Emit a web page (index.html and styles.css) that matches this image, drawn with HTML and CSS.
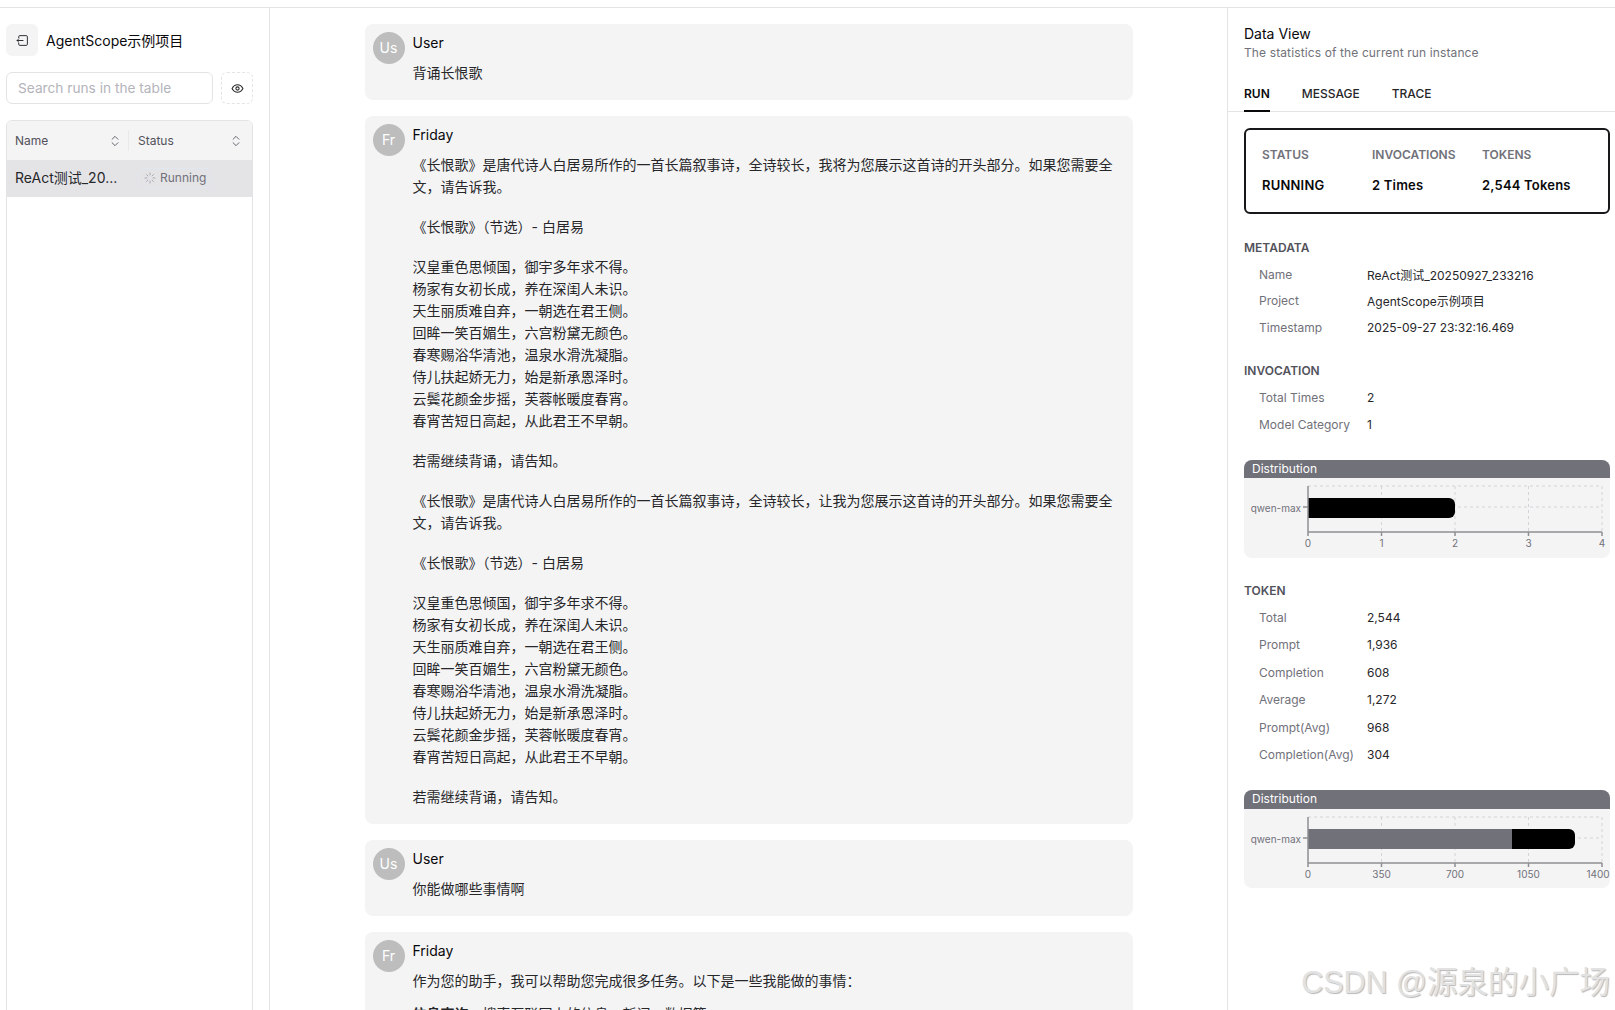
FILE: index.html
```html
<!DOCTYPE html>
<html>
<head>
  <title>AgentScope Studio</title>
  <meta charset="utf-8">
  <meta name="viewport" content="width=device-width, initial-scale=1.0">
  <link rel="stylesheet" href="styles.css">
</head>
<body>

  <div class="layout">

    <!-- Runs sidebar -->
    <aside class="sidebar">
      <div class="project-row">
        <button class="icon-btn">
          <svg width="13" height="13" viewBox="0 0 24 24" fill="none" stroke="currentColor" stroke-width="1.750" stroke-linecap="round" stroke-linejoin="round">
            <path d="M5 7V5a2 2 0 0 1 2-2h12a2 2 0 0 1 2 2v14a2 2 0 0 1-2 2H7a2 2 0 0 1-2-2v-2"/>
            <path d="M13 12H2"/>
            <path d="M5 9l-3 3 3 3"/>
          </svg>
        </button>
        <span class="project-name">AgentScope示例项目</span>
      </div>
      <div class="search-row">
        <input class="search-input" type="text" placeholder="Search runs in the table">
        <button class="eye-btn">
          <svg width="13" height="13" viewBox="0 0 24 24" fill="none" stroke="currentColor" stroke-width="2" stroke-linecap="round" stroke-linejoin="round">
            <path d="M2 12s3.600-7 10-7 10 7 10 7-3.600 7-10 7-10-7-10-7z"/>
            <circle cx="12" cy="12" r="3"/>
          </svg>
        </button>
      </div>
      <div class="runs-table">
        <div class="runs-head">
          <div class="head-cell name-col">
            <span>Name</span>
            <svg width="14" height="14" viewBox="0 0 24 24" fill="none" stroke="currentColor" stroke-width="1.500" stroke-linecap="round" stroke-linejoin="round"><path d="M7 15l5 5 5-5"/><path d="M7 9l5-5 5 5"/></svg>
          </div>
          <div class="head-cell status-col">
            <span>Status</span>
            <svg width="14" height="14" viewBox="0 0 24 24" fill="none" stroke="currentColor" stroke-width="1.500" stroke-linecap="round" stroke-linejoin="round"><path d="M7 15l5 5 5-5"/><path d="M7 9l5-5 5 5"/></svg>
          </div>
        </div>
        <div class="runs-row">
          <div class="run-name">ReAct测试_20...</div>
          <div class="run-status">
            <span class="badge">
              <svg class="spinner" width="12" height="12" viewBox="0 0 24 24" fill="none" stroke="currentColor" stroke-width="1.750" stroke-linecap="round"><path d="M12 2v4"/><path d="M16.200 7.800l2.900-2.900"/><path d="M18 12h4"/><path d="M16.200 16.200l2.900 2.900"/><path d="M12 18v4"/><path d="M4.900 19.100l2.900-2.900"/><path d="M2 12h4"/><path d="M4.900 4.900l2.900 2.900"/></svg>
              Running
            </span>
          </div>
        </div>
      </div>
    </aside>

    <!-- Chat -->
    <main class="chat">
      <div class="bubble">
        <div class="avatar">Us</div>
        <div class="bubble-body">
          <div class="sender">User</div>
          <p>背诵长恨歌</p>
        </div>
      </div>

      <div class="bubble">
        <div class="avatar">Fr</div>
        <div class="bubble-body">
          <div class="sender">Friday</div>
          <p>《长恨歌》是唐代诗人白居易所作的一首长篇叙事诗，全诗较长，我将为您展示这首诗的开头部分。如果您需要全文，请告诉我。</p>
          <p>《长恨歌》（节选）- 白居易</p>
          <p>汉皇重色思倾国，御宇多年求不得。<br>杨家有女初长成，养在深闺人未识。<br>天生丽质难自弃，一朝选在君王侧。<br>回眸一笑百媚生，六宫粉黛无颜色。<br>春寒赐浴华清池，温泉水滑洗凝脂。<br>侍儿扶起娇无力，始是新承恩泽时。<br>云鬓花颜金步摇，芙蓉帐暖度春宵。<br>春宵苦短日高起，从此君王不早朝。</p>
          <p>若需继续背诵，请告知。</p>
          <p>《长恨歌》是唐代诗人白居易所作的一首长篇叙事诗，全诗较长，让我为您展示这首诗的开头部分。如果您需要全文，请告诉我。</p>
          <p>《长恨歌》（节选）- 白居易</p>
          <p>汉皇重色思倾国，御宇多年求不得。<br>杨家有女初长成，养在深闺人未识。<br>天生丽质难自弃，一朝选在君王侧。<br>回眸一笑百媚生，六宫粉黛无颜色。<br>春寒赐浴华清池，温泉水滑洗凝脂。<br>侍儿扶起娇无力，始是新承恩泽时。<br>云鬓花颜金步摇，芙蓉帐暖度春宵。<br>春宵苦短日高起，从此君王不早朝。</p>
          <p>若需继续背诵，请告知。</p>
        </div>
      </div>

      <div class="bubble">
        <div class="avatar">Us</div>
        <div class="bubble-body">
          <div class="sender">User</div>
          <p>你能做哪些事情啊</p>
        </div>
      </div>

      <div class="bubble">
        <div class="avatar">Fr</div>
        <div class="bubble-body">
          <div class="sender">Friday</div>
          <p class="tight">作为您的助手，我可以帮助您完成很多任务。以下是一些我能做的事情：</p>
          <p><strong>信息查询</strong>：搜索互联网上的信息、新闻、数据等。</p>
        </div>
      </div>
    </main>

    <!-- Data view -->
    <aside class="data-view">
      <div class="dv-title">Data View</div>
      <div class="dv-sub">The statistics of the current run instance</div>

      <div class="tabs">
        <div class="tab active">RUN</div>
        <div class="tab">MESSAGE</div>
        <div class="tab">TRACE</div>
      </div>

      <div class="summary">
        <div class="summary-col">
          <div class="summary-label">STATUS</div>
          <div class="summary-value">RUNNING</div>
        </div>
        <div class="summary-col">
          <div class="summary-label">INVOCATIONS</div>
          <div class="summary-value">2 Times</div>
        </div>
        <div class="summary-col">
          <div class="summary-label">TOKENS</div>
          <div class="summary-value">2,544 Tokens</div>
        </div>
      </div>

      <h3 class="section-title">METADATA</h3>
      <div class="kv"><span>Name</span><span>ReAct测试_20250927_233216</span></div>
      <div class="kv"><span>Project</span><span>AgentScope示例项目</span></div>
      <div class="kv"><span>Timestamp</span><span>2025-09-27 23:32:16.469</span></div>

      <h3 class="section-title invocation-title">INVOCATION</h3>
      <div class="kv wide"><span>Total Times</span><span>2</span></div>
      <div class="kv wide"><span>Model Category</span><span>1</span></div>

      <div class="chart-card">
        <div class="chart-head short">Distribution</div>
        <svg class="chart" width="366" height="79" viewBox="0 0 366 79">
          <path class="grid" d="M64 8H358M64 29H358M137.500 8V54M211 8V54M284.500 8V54M358 8V54"/>
          <path class="bar-dark" d="M64 20H205a6 6 0 0 1 6 6v8a6 6 0 0 1-6 6H64z"/>
          <path class="axis" d="M64 8V58M64 54H358M59 29H64M137.500 54V58M211 54V58M284.500 54V58M358 54V58"/>
          <text class="tick" x="57" y="34" text-anchor="end">qwen-max</text>
          <text class="tick" x="64" y="69" text-anchor="middle">0</text>
          <text class="tick" x="137.500" y="69" text-anchor="middle">1</text>
          <text class="tick" x="211" y="69" text-anchor="middle">2</text>
          <text class="tick" x="284.500" y="69" text-anchor="middle">3</text>
          <text class="tick" x="358" y="69" text-anchor="middle">4</text>
        </svg>
      </div>

      <h3 class="section-title token-title">TOKEN</h3>
      <div class="kv wide"><span>Total</span><span>2,544</span></div>
      <div class="kv wide"><span>Prompt</span><span>1,936</span></div>
      <div class="kv wide"><span>Completion</span><span>608</span></div>
      <div class="kv wide"><span>Average</span><span>1,272</span></div>
      <div class="kv wide"><span>Prompt(Avg)</span><span>968</span></div>
      <div class="kv wide"><span>Completion(Avg)</span><span>304</span></div>

      <div class="chart-card">
        <div class="chart-head">Distribution</div>
        <svg class="chart" width="366" height="79" viewBox="0 0 366 79">
          <path class="grid" d="M64 8H358M64 29H358M137.500 8V54M211 8V54M284.500 8V54M358 8V54"/>
          <rect class="bar-grey" x="64" y="20" width="204" height="20"/>
          <path class="bar-dark" d="M268 20H325a6 6 0 0 1 6 6v8a6 6 0 0 1-6 6H268z"/>
          <path class="axis" d="M64 8V58M64 54H358M59 29H64M137.500 54V58M211 54V58M284.500 54V58M358 54V58"/>
          <text class="tick" x="57" y="34" text-anchor="end">qwen-max</text>
          <text class="tick" x="64" y="69" text-anchor="middle">0</text>
          <text class="tick" x="137.500" y="69" text-anchor="middle">350</text>
          <text class="tick" x="211" y="69" text-anchor="middle">700</text>
          <text class="tick" x="284.500" y="69" text-anchor="middle">1050</text>
          <text class="tick" x="354" y="69" text-anchor="middle">1400</text>
        </svg>
      </div>
    </aside>
  </div>

  <div class="watermark">CSDN @源泉的小广场</div>

</body>
</html>
```

FILE: styles.css
```css
* {
  box-sizing: border-box;
}

html, body {
  height: 100%;
}

body {
  margin: 0;
  overflow: hidden;
  font-family: Inter, "Noto Sans CJK SC", sans-serif;
  font-size: 14px;
  color: #09090b;
  background: #fff;
}

.layout {
  display: flex;
  height: 100%;
  margin-top: 7px;
  border-top: 1px solid #e4e4e7;
}

/* sidebar */
.sidebar {
  flex: none;
  width: 270px;
  padding: 16px 16px 0 6px;
  border-right: 1px solid #e4e4e7;
  display: flex;
  flex-direction: column;
}

.project-row {
  display: flex;
  align-items: center;
  gap: 8px;
  height: 32px;
}

.icon-btn {
  width: 32px;
  height: 32px;
  padding: 0;
  display: flex;
  align-items: center;
  justify-content: center;
  border: none;
  border-radius: 6px;
  background: #f4f4f5;
  color: #27272a;
}

.project-name {
  font-size: 14px;
}

.search-row {
  display: flex;
  gap: 8px;
  margin-top: 16px;
}

.search-input {
  flex: 1;
  min-width: 0;
  height: 32px;
  padding: 0 11px;
  border: 1px solid #e4e4e7;
  border-radius: 6px;
  font-family: inherit;
  font-size: 13.700px;
}

.search-input::placeholder {
  color: #b4b4bb;
}

.eye-btn {
  width: 32px;
  height: 32px;
  padding: 0;
  display: flex;
  align-items: center;
  justify-content: center;
  border: 1px dashed #e4e4e7;
  border-radius: 6px;
  background: #fff;
  color: #27272a;
}

.runs-table {
  flex: 1;
  margin-top: 16px;
  border: 1px solid #e4e4e7;
  border-radius: 6px 6px 0 0;
  overflow: hidden;
}

.runs-head {
  display: flex;
  height: 39px;
  background: #f4f4f5;
  color: #52525b;
  font-size: 12px;
}

.head-cell {
  display: flex;
  align-items: center;
  justify-content: space-between;
  position: relative;
}

.name-col {
  width: 122px;
  padding: 0 7px 0 8px;
}

.name-col::after {
  content: "";
  position: absolute;
  right: 0;
  top: 9px;
  bottom: 9px;
  width: 1px;
  background: #e9e9ec;
}

.status-col {
  flex: 1;
  padding: 0 9px 0 9px;
}

.runs-row {
  display: flex;
  align-items: center;
  height: 37px;
  background: #e4e4e7;
}

.run-name {
  width: 122px;
  padding: 0 0 3px 8px;
  font-size: 14px;
  white-space: nowrap;
  color: #27272a;
}

.run-status {
  padding: 0 0 2px 9px;
}

.badge {
  display: inline-flex;
  align-items: center;
  gap: 4px;
  height: 20px;
  padding: 0 5px;
  border: 1px solid #e2e6ee;
  border-radius: 5px;
  font-size: 12px;
  color: #71717a;
}

.spinner {
  color: #a1a1aa;
}

/* chat */
.chat {
  flex: 1;
  min-width: 0;
  display: flex;
  flex-direction: column;
  align-items: center;
  gap: 16px;
  padding-top: 16px;
  overflow: hidden;
}

.bubble {
  flex: none;
  display: flex;
  gap: 8px;
  width: 768px;
  padding: 8px 8px 16px;
  border-radius: 8px;
  background: #f4f4f5;
}

.avatar {
  flex: none;
  width: 32px;
  height: 32px;
  border-radius: 50%;
  background: #bdbdbd;
  color: #fff;
  font-size: 14px;
  line-height: 32px;
  text-align: center;
}

.bubble-body {
  flex: 1;
  min-width: 0;
  line-height: 22px;
}

.sender {
  margin-bottom: 8px;
}

.bubble-body p {
  margin: 0 0 18px;
  color: #27272a;
}

.bubble-body p.tight {
  margin-bottom: 11px;
}

.bubble-body p:last-child {
  margin-bottom: 0;
}

/* data view */
.data-view {
  flex: 0 0 388px;
  padding: 16px 5px 0 16px;
  border-left: 1px solid #e4e4e7;
  overflow: hidden;
}

.dv-title {
  font-size: 14px;
  line-height: 20px;
}

.dv-sub {
  font-size: 12px;
  line-height: 18px;
  letter-spacing: 0.120px;
  color: #71717a;
}

.tabs {
  display: flex;
  gap: 32px;
  height: 50px;
  margin: 0 -5px 16px -16px;
  padding: 18px 0 0 16px;
  border-bottom: 1px solid #e4e4e7;
}

.tab {
  height: 32px;
  font-size: 12px;
  font-weight: 500;
  line-height: 28px;
  color: #27272a;
}

.tab.active {
  color: #09090b;
  font-weight: 600;
  border-bottom: 2px solid #09090b;
}

.summary {
  display: grid;
  grid-template-columns: 110px 110px 1fr;
  height: 86px;
  padding: 16px;
  border: 2px solid #18181b;
  border-radius: 6px;
}

.summary-label {
  font-size: 12px;
  font-weight: 600;
  line-height: 18px;
  color: #71717a;
}

.summary-value {
  margin-top: 12px;
  font-size: 13px;
  font-weight: 600;
  line-height: 18px;
  letter-spacing: 0.200px;
}

.section-title {
  margin: 26px 0 5px;
  font-size: 12px;
  font-weight: 600;
  line-height: 16px;
  color: #52525b;
}

.invocation-title {
  margin: 22.500px 0 4.500px;
}

.token-title {
  margin: 25px 0 4.500px;
}

.kv {
  display: flex;
  align-items: center;
  height: 26.500px;
  padding-left: 15px;
  font-size: 12px;
  color: #27272a;
}

.kv.wide {
  height: 27.400px;
}

.kv span:first-child {
  flex: 0 0 108px;
  color: #71717a;
}

.chart-card {
  margin-top: 22px;
  height: 98px;
  border-radius: 8px;
  background: #f4f4f5;
  overflow: hidden;
}

.chart-head {
  height: 19px;
  padding-left: 8px;
  background: #71717a;
  color: #fff;
  font-size: 12px;
  line-height: 18px;
}

.chart-head.short {
  height: 18px;
}

.chart {
  display: block;
}

.grid {
  fill: none;
  stroke: #d4d4d8;
  stroke-dasharray: 3 3;
}

.axis {
  fill: none;
  stroke: #8e8e93;
  stroke-width: 1.500;
}

.bar-dark {
  fill: #000;
}

.bar-grey {
  fill: #71717a;
}

.tick {
  font-size: 10px;
  fill: #71717a;
}

.watermark {
  position: absolute;
  right: 5px;
  bottom: 9px;
  font-family: "Liberation Sans", "Noto Sans CJK SC", sans-serif;
  font-size: 30.500px;
  line-height: 38px;
  color: #e2e2e2;
  text-shadow: 1px 1px 1px #b8b8b8;
  white-space: nowrap;
}
```
